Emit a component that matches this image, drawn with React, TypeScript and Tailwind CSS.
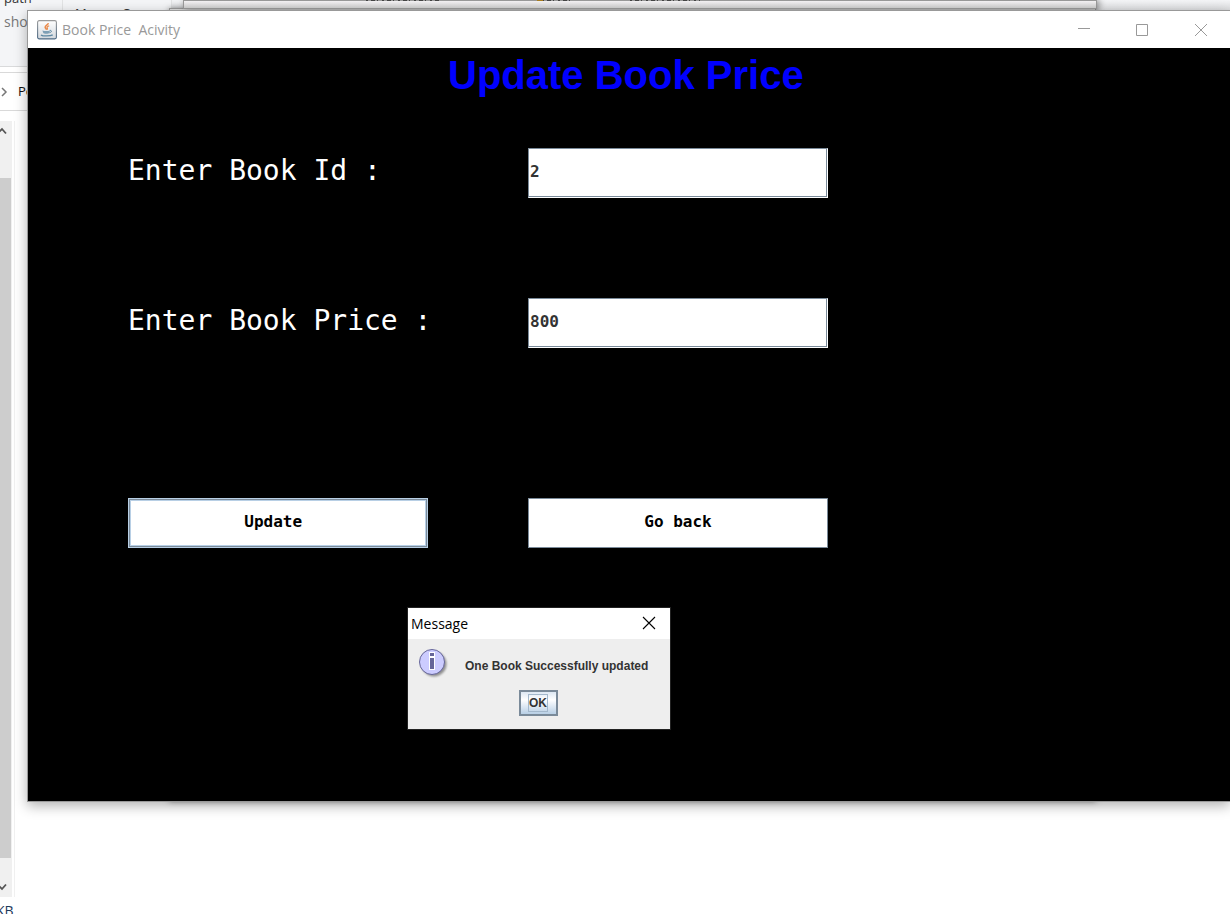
import React from 'react';

function JavaIcon() {
  return (
    <svg className="size-5 shrink-0" viewBox="0 0 20 20" aria-hidden="true">
      <defs>
        <linearGradient id="javaFrame" x1="0" y1="0" x2="0" y2="1">
          <stop offset="0" stopColor="#ffffff" />
          <stop offset="1" stopColor="#d3d8dd" />
        </linearGradient>
        <linearGradient id="javaEdge" x1="0" y1="0" x2="0" y2="1">
          <stop offset="0" stopColor="#9a9a9a" />
          <stop offset="1" stopColor="#4d6a85" />
        </linearGradient>
      </defs>
      <rect x="0.6" y="0.6" width="18.8" height="18.3" rx="1.6" fill="url(#javaFrame)" stroke="url(#javaEdge)" strokeWidth="1.1" />
      <path d="M11.2 3.200c.3 1.600-3.300 2.400-3 4.100.1.900 1 1.400 1.400 2.400" fill="none" stroke="#ea8a4a" strokeWidth="1.600" />
      <path d="M12.200 5.700c-1.500.5-2.600 1.200-2 2.100.4.600.5 1.100-.2 1.900" fill="none" stroke="#ea8a4a" strokeWidth="1.200" />
      <path d="M5.400 10.400c2.400.7 5.600.7 7.600 0l-.6 2.400c-.4 1.300-5.800 1.300-6.200 0z" fill="#7d9fb5" />
      <path d="M12.800 10.400c2.200-.4 2.400 1.800-.4 2.400" fill="none" stroke="#5d88a3" strokeWidth="1" />
      <path d="M4 14.900c1.600 1.400 9.500 1.400 11.700 0" fill="none" stroke="#5d88a3" strokeWidth="1.300" />
    </svg>
  );
}

function InfoIcon() {
  return (
    <svg className="size-8 shrink-0" viewBox="0 0 32 32" aria-hidden="true">
      <defs>
        <filter id="infoShadow" x="-20%" y="-20%" width="150%" height="150%">
          <feGaussianBlur stdDeviation="1.2" />
        </filter>
      </defs>
      <circle cx="16" cy="17" r="12.500" fill="#000" opacity="0.4" filter="url(#infoShadow)" />
      <circle cx="14" cy="15" r="12.500" fill="#ccccff" stroke="#666699" />
      <path d="M11 5h6v18h-6z" fill="#ffffff" />
      <path d="M12 6h4v3h-4zM12 11h4v11h-4z" fill="#666699" />
    </svg>
  );
}

function Backdrop() {
  return (
    <div className="absolute inset-0 overflow-hidden bg-white font-['Open_Sans','Noto_Sans',sans-serif]" aria-hidden="true">
      <div className="flex h-[67px] border-b border-[#d9dadb] bg-[#f4f5f7] text-[13px] leading-4">
        <div className="w-[63px] shrink-0 border-r border-[#e2e3e4]">
          <div className="-mt-[10px] pl-1 text-[#333]">path</div>
          <div className="mt-2 pl-1 text-[14px] text-[#777]">shortcut</div>
        </div>
        <div className="w-[109px] shrink-0 border-r border-[#e2e3e4] pt-[5px] pl-3 text-[#333]">Move&nbsp;&nbsp;&nbsp;&nbsp;Copy</div>
        <div className="h-[10px] grow bg-linear-to-b from-[#f4f5f7] to-[#dcdddf]" />
      </div>
      <div className="mt-[5px] flex h-[39px] items-center border-y border-[#d9d9d9] text-[13px] text-[#111]">
        <svg className="h-3 w-2 shrink-0" viewBox="0 0 8 12">
          <path d="M2 2l4 4-4 4" fill="none" stroke="#777" strokeWidth="1.500" />
        </svg>
        <span className="pl-[10px]">Pooja</span>
      </div>
      <div className="mt-[10px] flex h-[776px] w-[15px] border-r border-[#f0f0f0]">
        <div className="flex w-3 flex-col bg-[#f0f0f0]">
          <svg className="h-[57px] w-3" viewBox="0 0 12 57">
            <path d="M-3 13l5-5 4 4.500" fill="none" stroke="#555" strokeWidth="1.800" />
          </svg>
          <div className="mr-px h-[680px] bg-[#cdcdcd]" />
          <svg className="h-[39px] w-3" viewBox="0 0 12 39">
            <path d="M-3 26l5 5 4-4.500" fill="none" stroke="#555" strokeWidth="1.800" />
          </svg>
        </div>
      </div>
      <div className="mt-1 text-[14px] leading-5 text-[#1e395b]">
        <span className="-ml-1">KB</span>
      </div>
      <div className="absolute top-2 left-[169px] h-[792px] w-[927px] border border-[#999] bg-[#ddd] shadow-[0_1px_6px_rgba(0,0,0,0.5)]" />
      <div className="absolute top-0 left-[183px] h-[9px] w-[914px] border border-[#999] bg-linear-to-b from-[#f3f1f3] to-[#cfcfcf] shadow-[2px_0_7px_rgba(0,0,0,0.45)]">
        <svg className="-mt-px block h-px w-full" viewBox="0 0 912 1" preserveAspectRatio="none">
          <path d="M182 .5h74M358 .5h30M446 .5h70" stroke="#444" strokeDasharray="2 3 4 2 1 4" />
          <path d="M353 .5h6" stroke="#a87c1e" />
        </svg>
      </div>
    </div>
  );
}

function Field({ id, label, value }: { id: string; label: string; value: string }) {
  return (
    <>
      <label htmlFor={id} className="h-[50px] pt-[3px] text-[28px] leading-10 whitespace-nowrap text-white">
        {label}
      </label>
      <span className="flex h-[50px] border border-t-[#7a8a99] border-r-white border-b-white border-l-[#7a8a99] bg-white">
        <input
          id={id}
          defaultValue={value}
          className="w-full border-r border-b border-[#7a8a99] bg-white pb-[2px] pl-px text-[16px] font-bold text-[#333] outline-none"
        />
      </span>
    </>
  );
}

function MessageDialog() {
  return (
    <section
      role="dialog"
      aria-labelledby="dialog-title"
      className="absolute top-[560px] left-[380px] w-[262px] bg-[#eeeeee] font-['Liberation_Sans',Arial,sans-serif] outline outline-[#222]"
    >
      <header className="flex h-[31px] items-center justify-between bg-white pr-[14px] pl-[3px]">
        <h2 id="dialog-title" className="font-['Open_Sans','Noto_Sans',sans-serif] text-[14px] text-black">
          Message
        </h2>
        <button type="button" aria-label="Close message" className="pb-px">
          <svg className="block size-[14px]" viewBox="0 0 14 14">
            <path d="M1 1l12 12M13 1L1 13" stroke="#000" strokeWidth="1.100" />
          </svg>
        </button>
      </header>
      <div className="flex pt-2 pl-[10px]">
        <InfoIcon />
        <p className="pt-[11px] pl-[15px] text-[12px] leading-4 font-bold whitespace-nowrap text-[#333]">
          One Book Successfully updated
        </p>
      </div>
      <div className="flex justify-center pt-[11px] pr-[2px] pb-[13px]">
        <button
          type="button"
          className="flex h-[26px] w-[39px] items-center justify-center border-2 border-[#7a8a99] bg-linear-to-b from-[#dde8f3] via-white via-35% to-[#b8cfe5]"
        >
          <span className="border border-[#a3b8cc] text-[12px] leading-4 font-bold text-[#333]">OK</span>
        </button>
      </div>
    </section>
  );
}

export default function App() {
  return (
    <div className="relative min-h-screen overflow-hidden">
      <Backdrop />
      <div className="relative pt-[10px] pl-[27px]">
        <div className="border border-r-0 border-[#999] shadow-[0_4px_12px_rgba(0,0,0,0.3)]">
          <header className="flex h-[37px] items-center bg-white pl-[9px] text-[#999]">
            <JavaIcon />
            <h2 className="grow pl-[5px] font-['Open_Sans','Noto_Sans',sans-serif] text-[14px] whitespace-pre">Book Price  Acivity</h2>
            <div className="flex h-full">
              <button type="button" aria-label="Minimize" className="grid w-[58px] place-items-center">
                <svg className="size-3" viewBox="0 0 12 12">
                  <path d="M0 4.500h12" stroke="currentColor" />
                </svg>
              </button>
              <button type="button" aria-label="Maximize" className="grid w-[58px] place-items-center">
                <svg className="size-3" viewBox="0 0 12 12">
                  <path d="M.5.5h11v11H.5z" fill="none" stroke="currentColor" />
                </svg>
              </button>
              <button type="button" aria-label="Close" className="grid w-[59px] place-items-center">
                <svg className="size-3" viewBox="0 0 12 12">
                  <path d="M0 0l12 12M12 0L0 12" stroke="currentColor" />
                </svg>
              </button>
            </div>
          </header>
          <main className="relative bg-black pb-[253px] font-['DejaVu_Sans_Mono',monospace]">
            <h1 className="h-[100px] pt-[3px] pl-[420px] font-['Liberation_Sans',Arial,sans-serif] text-[40px] leading-[48px] font-bold whitespace-nowrap text-[#0000ff]">
              Update Book Price
            </h1>
            <form className="pl-[100px]" onSubmit={(e) => e.preventDefault()}>
              <div className="grid grid-cols-[300px_300px] gap-[100px]">
                <Field id="book-id" label="Enter Book Id :" value="2" />
                <Field id="book-price" label="Enter Book Price :" value="800" />
              </div>
              <div className="mt-[150px] grid grid-cols-[300px_300px] gap-[100px] text-[16px] font-bold text-black">
                <button
                  type="submit"
                  className="h-[50px] border border-[#b8cfe5] bg-white pb-[2px] whitespace-pre shadow-[inset_0_0_0_1px_#7a8a99,inset_0_0_0_2px_#b8cfe5]"
                >
                  {'Update '}
                </button>
                <button type="button" className="h-[50px] border border-[#7a8a99] bg-white pb-[2px]">
                  Go back
                </button>
              </div>
            </form>
            <MessageDialog />
          </main>
        </div>
      </div>
    </div>
  );
}
